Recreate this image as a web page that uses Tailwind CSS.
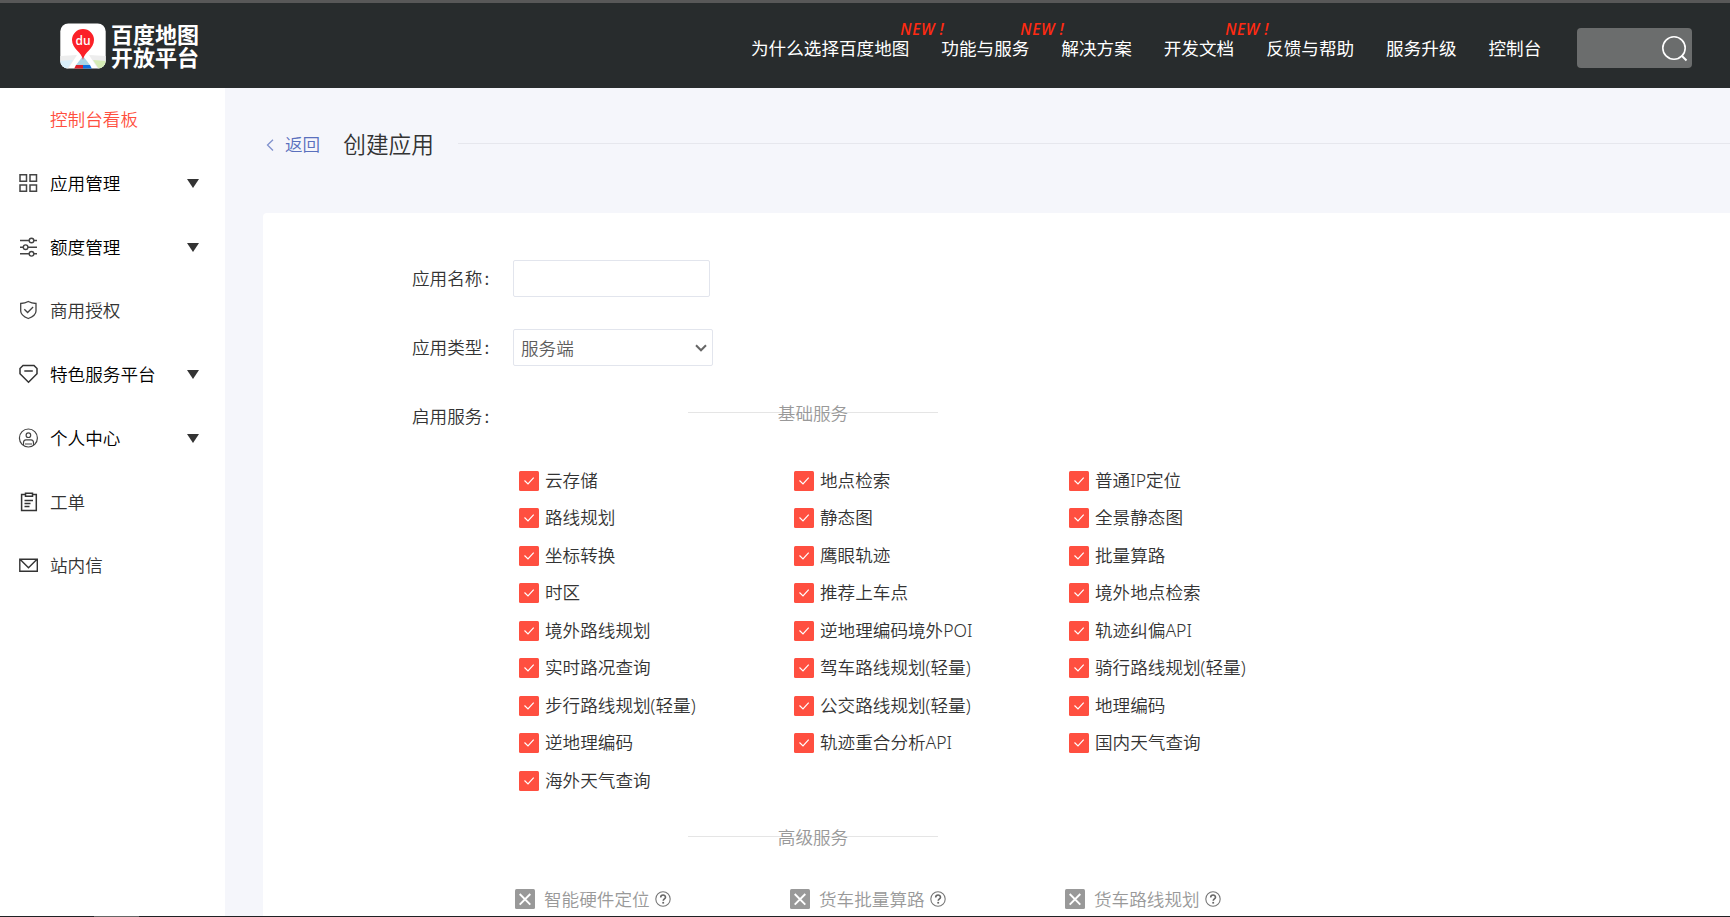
<!DOCTYPE html>
<html lang="zh-CN">
<head>
<meta charset="utf-8">
<title>创建应用</title>
<script src="https://cdn.jsdelivr.net/npm/@tailwindcss/browser@4"></script>
</head>
<body class="relative flex h-[917px] w-[1730px] flex-col overflow-hidden bg-[#f5f6fb] font-['Noto_Sans','Noto_Sans_CJK_SC',sans-serif] text-[17.6px] leading-6 font-[350] text-[#333]">
<svg class="hidden">
  <symbol id="check" viewBox="0 0 20 20"><rect width="20" height="20" rx="1.5" fill="#ff4f40"/><path d="M5.5 9.5l3.5 3.4 5.7-6.2" fill="none" stroke="#fff" stroke-width="1.2"/></symbol>
  <symbol id="cross" viewBox="0 0 20 20"><rect width="20" height="20" rx="1.5" fill="#999"/><path d="M4.7 5l10.6 10.7M15.3 5L4.7 15.7" fill="none" stroke="#fff" stroke-width="1.9"/></symbol>
  <symbol id="help" viewBox="0 0 16 16"><circle cx="8" cy="8" r="7.2" fill="none" stroke="#777" stroke-width="1.1"/><path d="M5.7 6.4c0-3.1 4.8-3.1 4.8-.2 0 1.6-2.3 1.6-2.3 3.5" fill="none" stroke="#666" stroke-width="1.6"/><rect x="7.3" y="10.9" width="1.8" height="1.7" fill="#666"/></symbol>
  <symbol id="arrow" viewBox="0 0 12 9"><path d="M0 0h12L6 9z" fill="#333"/></symbol>
</svg>

<header class="flex h-[88px] shrink-0 items-center border-t-3 border-[#585858] bg-[#282c2d] pl-[60px] font-normal text-white">
  <svg class="h-[46px] w-[46px]" viewBox="0 0 46 46">
    <defs><clipPath id="tile"><rect x=".3" y=".5" width="45.4" height="45" rx="8"/></clipPath></defs>
    <g clip-path="url(#tile)">
      <rect width="46" height="46" fill="#fff"/>
      <path d="M0 33l17-1-9 14H0z" fill="#ededed"/><path d="M0 38l13-1-6 9H0z" fill="#d9effa"/>
      <path d="M46 33l-17-1 9 14h8z" fill="#ededed"/><path d="M46 38l-13-1 6 9h7z" fill="#d5ecb5"/>
      <path d="M23 33l-7 9h14z" fill="#a8d5e8"/>
      <path d="M16 42h7v4h-9z" fill="#d81f2a"/><path d="M23 42h7l2 4h-9z" fill="#0d6fe0"/>
      <path d="M23 37C22 29 12 26 12 17a11 11 0 0 1 22 0c0 9-10 12-11 20z" fill="#fb2128"/>
    </g>
    <text x="23" y="21.5" text-anchor="middle" font-family="Open Sans, sans-serif" font-size="12" font-weight="600" fill="#fff">du</text>
  </svg>
  <div class="ml-[5px] flex h-[46px] w-[89px] flex-col text-[22px] leading-[23px] font-bold whitespace-nowrap"><span>百度地图</span><span>开放平台</span></div>
  <nav class="mt-[4px] ml-[551px] flex gap-8 whitespace-nowrap">
    <a class="relative">为什么选择百度地图<i class="absolute -top-[14px] left-[calc(100%-9px)] font-['Open_Sans'] text-[15.4px] leading-4 font-semibold tracking-[0.6px] text-[#ff2a12]">NEW !</i></a>
    <a class="relative">功能与服务<i class="absolute -top-[14px] left-[calc(100%-9px)] font-['Open_Sans'] text-[15.4px] leading-4 font-semibold tracking-[0.6px] text-[#ff2a12]">NEW !</i></a>
    <a>解决方案</a>
    <a class="relative">开发文档<i class="absolute -top-[14px] left-[calc(100%-9px)] font-['Open_Sans'] text-[15.4px] leading-4 font-semibold tracking-[0.6px] text-[#ff2a12]">NEW !</i></a>
    <a>反馈与帮助</a>
    <a>服务升级</a>
    <a>控制台</a>
  </nav>
  <div class="mt-[5px] ml-[36px] flex h-10 w-[115px] items-center justify-end rounded bg-[#6b6d6d] pr-1">
    <svg class="h-7 w-7" viewBox="0 0 28 28" fill="none" stroke="#fff"><circle cx="14" cy="14" r="11.2" stroke-width="1.6"/><path d="M21.5 21.5l5 5" stroke-width="2"/></svg>
  </div>
</header>

<div class="flex min-h-0 flex-1">
  <aside class="flex w-[225px] shrink-0 flex-col bg-white text-black">
    <a class="flex h-[63px] items-center pb-px pl-[50px] text-[#ff4f40]">控制台看板</a>
    <a class="flex h-[63.7px] items-center pr-[26px] pl-[18px]">
      <svg class="mr-[12px] h-5 w-5" viewBox="0 0 20 20" fill="none" stroke="#444" stroke-width="1.5"><path d="M2 1.8h6.5v6.5H2zM12 1.8h6.5v6.5H12zM2 12h6.5v6.3H2zM12 12h6.5v6.3H12z"/></svg>应用管理
      <svg class="mt-[2px] ml-auto h-[9px] w-3"><use href="#arrow"/></svg>
    </a>
    <a class="flex h-[63.7px] items-center pr-[26px] pl-[18px]">
      <svg class="mr-[12px] h-5 w-5" viewBox="0 0 20 20" fill="none" stroke="#444" stroke-width="1.4"><path d="M2 3.5h9M16 3.5h3M2 10.2h3.2M10 10.2h9M2 16.8h9M16 16.8h3"/><circle cx="13.5" cy="3.5" r="2.3"/><circle cx="7.6" cy="10.2" r="2.3"/><circle cx="13.5" cy="16.8" r="2.3"/></svg>额度管理
      <svg class="mt-[2px] ml-auto h-[9px] w-3"><use href="#arrow"/></svg>
    </a>
    <a class="flex h-[63.7px] items-center pl-[18px] text-[#333]">
      <svg class="mr-[12px] h-5 w-5" viewBox="0 0 20 20" fill="none" stroke="#444" stroke-width="1.3"><path d="M10.3 1.5c2.5 1.4 5 1.9 7.7 2V11c0 3.5-3.8 6-7.7 7.5C6.5 17 2.7 14.5 2.7 11V3.5c2.7-.1 5.1-.6 7.6-2z"/><path d="M6.3 9.3l3.3 3.2 5.5-5.5"/></svg>商用授权
    </a>
    <a class="flex h-[63.7px] items-center pr-[26px] pl-[18px]">
      <svg class="mr-[12px] h-5 w-5" viewBox="0 0 20 20" fill="none" stroke="#333" stroke-width="1.5"><path d="M5 1.500h11l3 3v5.300L10.500 18.300 2 9.800V4.500z"/><path d="M6.300 7h8.500"/></svg>特色服务平台
      <svg class="mt-[2px] ml-auto h-[9px] w-3"><use href="#arrow"/></svg>
    </a>
    <a class="flex h-[63.7px] items-center pr-[26px] pl-[18px]">
      <svg class="mr-[12px] h-5 w-5" viewBox="0 0 20 20" fill="none" stroke="#444" stroke-width="1.2"><circle cx="10.4" cy="10" r="9"/><circle cx="10.4" cy="7.2" r="2.3"/><path d="M5.5 17.3v-2.5c0-2.2 1-3 2.5-3h5c1.5 0 2.5.8 2.5 3v2.5M7 16h7"/></svg>个人中心
      <svg class="mt-[2px] ml-auto h-[9px] w-3"><use href="#arrow"/></svg>
    </a>
    <a class="flex h-[63.7px] items-center pt-px pl-[18px] text-[#333]">
      <svg class="mr-[12px] h-5 w-5" viewBox="0 0 20 20" fill="none" stroke="#333" stroke-width="1.5"><path d="M7.5 2.5H3.6v16h14.700v-16H14.500"/><path d="M7.500 1.300h7v3h-7zM6.500 8.500H15M6.500 11.500h6M6.500 14.500h5"/></svg>工单
    </a>
    <a class="flex h-[63.7px] items-center pl-[18px] text-[#333]">
      <svg class="mr-[12px] h-5 w-5" viewBox="0 0 20 20" fill="none" stroke="#333" stroke-width="1.4"><path d="M1.8 4.300h17.500v11.900H1.800zM2.500 4.800l8 8 8-8"/></svg>站内信
    </a>
  </aside>

  <main class="flex min-w-0 flex-1 flex-col">
    <div class="flex h-[125px] shrink-0 items-start pt-[41px] pl-[41px]">
      <svg class="mt-[10px] h-3 w-3" viewBox="0 0 12 12" fill="none" stroke="#7f91cd" stroke-width="1.3"><path d="M7 .7L1.500 6 7 11.500"/></svg>
      <span class="mt-[3px] ml-[7px] text-[#5a70bd]">返回</span>
      <h1 class="ml-[23px] text-[22.7px] leading-8">创建应用</h1>
      <div class="mt-[14px] ml-[24px] h-px flex-1 bg-[#e6e7ed]"></div>
    </div>
    <section class="ml-[38px] flex-1 overflow-hidden rounded-tl bg-white pt-[47px]">
      <div class="flex h-[69px] items-start pl-[149px]">
        <label class="mt-[6px] w-[101px]">应用名称<span class="ml-[2px] font-['Noto_Sans_CJK_SC']">:</span></label>
        <div class="h-[37px] w-[197px] rounded-[2px] border border-[#e2e5ed]"></div>
      </div>
      <div class="flex h-[69px] items-start pl-[149px]">
        <label class="mt-[6px] w-[101px]">应用类型<span class="ml-[2px] font-['Noto_Sans_CJK_SC']">:</span></label>
        <div class="flex h-[37px] w-[200px] items-center justify-between rounded-[2px] border border-[#e2e5ed] pr-[5px] pl-[7px] text-[#5c5c5c]">服务端
          <svg class="h-3 w-3" viewBox="0 0 12 12" fill="none" stroke="#666" stroke-width="2"><path d="M1 3.300l5 5 5-5"/></svg>
        </div>
      </div>
      <div class="flex items-start pl-[149px]">
        <label class="mt-[6px] w-[101px]">启用服务<span class="ml-[2px] font-['Noto_Sans_CJK_SC']">:</span></label>
        <div class="w-[850px]">
          <div class="mt-[2px] ml-[175px] grid h-6 w-[250px] place-items-center text-[#999]">
            <div class="col-start-1 row-start-1 h-px w-full bg-[#e5e5e5]"></div>
            <span class="col-start-1 row-start-1 pt-px">基础服务</span>
          </div>
          <div id="basic" class="mt-[38px] ml-[6px] grid auto-rows-[37.5px] grid-cols-[275px_275px_275px]"></div>
          <div class="mt-[25px] ml-[175px] grid h-6 w-[250px] place-items-center text-[#999]">
            <div class="col-start-1 row-start-1 h-px w-full bg-[#e5e5e5]"></div>
            <span class="col-start-1 row-start-1">高级服务</span>
          </div>
          <div class="mt-[38px] ml-[2px] grid grid-cols-[275px_275px_275px] text-[#999]">
            <div class="flex items-center"><svg class="mr-[9px] h-5 w-5"><use href="#cross"/></svg>智能硬件定位<svg class="ml-[5px] h-4 w-4"><use href="#help"/></svg></div>
            <div class="flex items-center"><svg class="mr-[9px] h-5 w-5"><use href="#cross"/></svg>货车批量算路<svg class="ml-[5px] h-4 w-4"><use href="#help"/></svg></div>
            <div class="flex items-center"><svg class="mr-[9px] h-5 w-5"><use href="#cross"/></svg>货车路线规划<svg class="ml-[5px] h-4 w-4"><use href="#help"/></svg></div>
          </div>
        </div>
      </div>
    </section>
  </main>
</div>
<footer class="flex h-px shrink-0 bg-[#202124] pl-[94px]"><div class="h-px w-[45px] bg-[#666]"></div></footer>
<script>
const services = ['云存储','地点检索','普通IP定位','路线规划','静态图','全景静态图','坐标转换','鹰眼轨迹','批量算路','时区','推荐上车点','境外地点检索','境外路线规划','逆地理编码境外POI','轨迹纠偏API','实时路况查询','驾车路线规划(轻量)','骑行路线规划(轻量)','步行路线规划(轻量)','公交路线规划(轻量)','地理编码','逆地理编码','轨迹重合分析API','国内天气查询','海外天气查询'];
document.getElementById('basic').innerHTML = services.map(s => `<label class="flex items-center whitespace-nowrap"><svg class="mr-[6px] h-5 w-5"><use href="#check"/></svg><span class="pb-[2px]">${s}</span></label>`).join('');
</script>
</body>
</html>
